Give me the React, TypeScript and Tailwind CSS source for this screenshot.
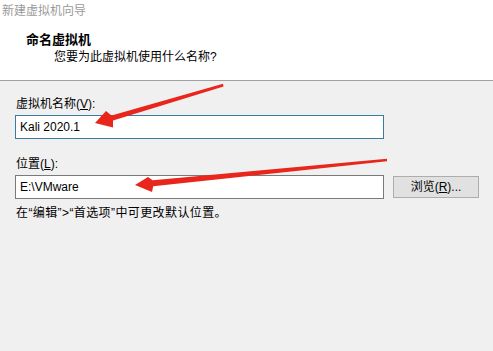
import React from "react";

const font = {
  fontFamily: '"Liberation Sans", "Noto Sans CJK SC", sans-serif',
};

const Arrows: React.FC = () => (
  <svg
    className="pointer-events-none absolute left-0 top-0"
    width="493"
    height="351"
    viewBox="0 0 493 351"
  >
    <polygon
      points="223,83.8 111.5,115.5 106,111 95,123 113,127.5 113,120.5 223.5,86.5"
      fill="#e8261c"
    />
    <polygon
      points="387,158.8 152.6,180.2 148,177 135,185 152,192 153.2,186.2 387,161.2"
      fill="#e8261c"
    />
  </svg>
);

export default function App() {
  return (
    <div
      className="relative flex h-[351px] w-[493px] flex-col overflow-hidden bg-white text-[12px] text-black"
      style={font}
    >
      {/* title */}
      <div className="flex h-[21px] items-center pl-[2px] leading-[16px] text-[#9a9a9a]">
        新建虚拟机向导
      </div>

      {/* header */}
      <div className="flex h-[59px] flex-col pt-[11px] leading-[16px]">
        <div className="pl-[26px] text-[13px] font-bold">命名虚拟机</div>
        <div className="mt-[1px] pl-[54px]">您要为此虚拟机使用什么名称?</div>
      </div>
      <div className="h-px bg-[#a0a0a0]" />

      {/* body */}
      <div className="flex flex-1 flex-col bg-[#f0f0f0] pl-[15px] pt-[15px] leading-[16px]">
        <div className="pl-px">
          虚拟机名称(<span className="underline">V</span>):
        </div>
        <div className="mt-[3px] flex h-[24px] w-[369px] items-center border border-[#3a7ca0] bg-white pl-[4px]">
          Kali 2020.1
        </div>

        <div className="mt-[17px] pl-px">
          位置(<span className="underline">L</span>):
        </div>
        <div className="mt-[3px] flex items-center gap-[9px]">
          <div className="flex h-[24px] w-[369px] items-center border border-[#7a7a7a] bg-white pl-[4px]">
            E:\VMware
          </div>
          <button className="flex h-[22px] w-[86px] items-center justify-center border border-[#adadad] bg-[#e1e1e1]">
            浏览(<span className="underline">R</span>)...
          </button>
        </div>

        <div className="mt-[6px] pl-px tracking-[0.4px]">
          在“编辑”&gt;“首选项”中可更改默认位置。
        </div>
      </div>

      <Arrows />
    </div>
  );
}
